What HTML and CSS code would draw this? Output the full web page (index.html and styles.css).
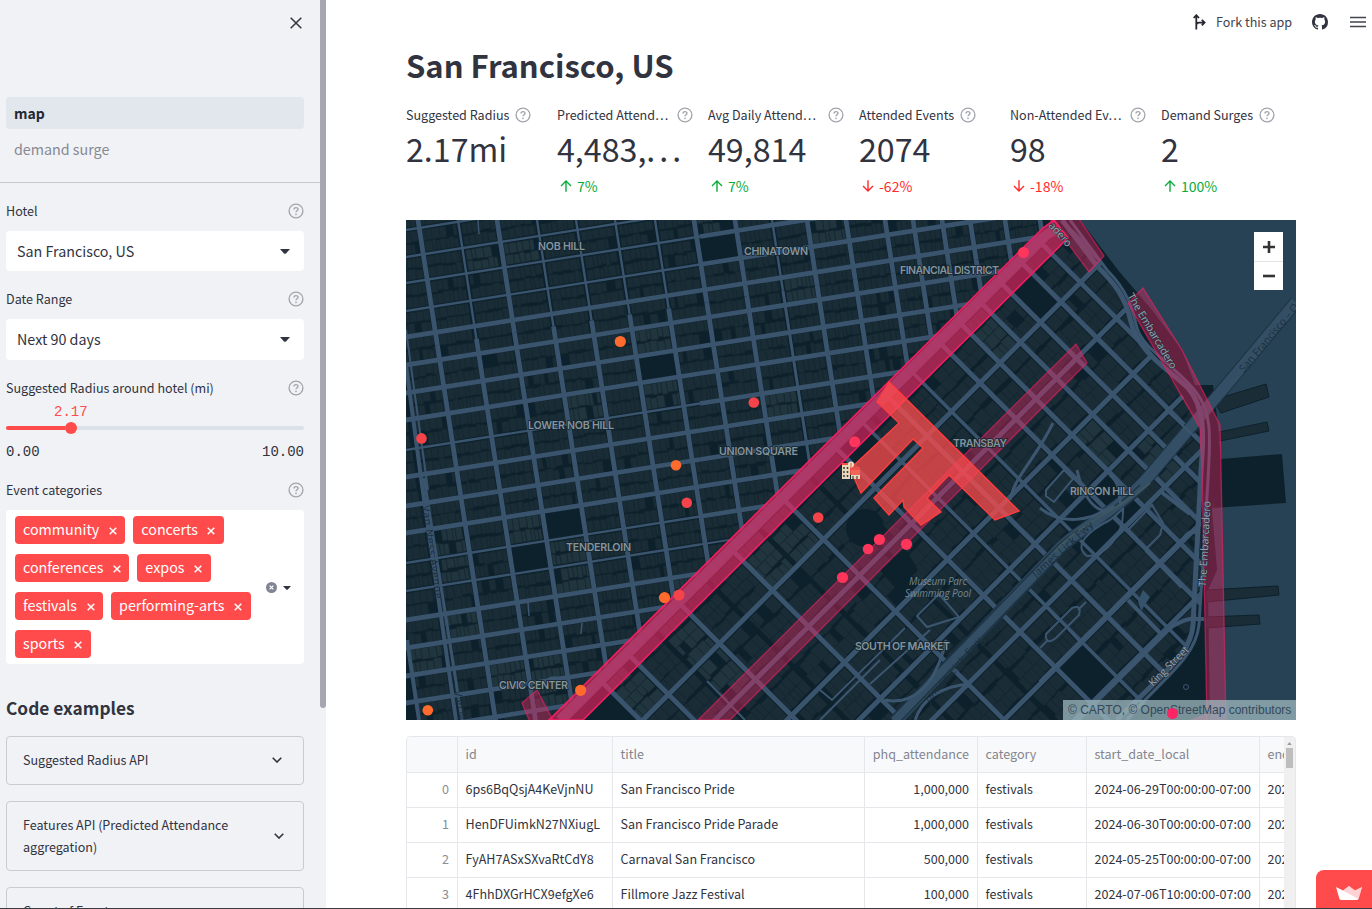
FILE: index.html
```html
<!DOCTYPE html>
<html lang="en">
<head>
<meta charset="utf-8">
<title>San Francisco, US</title>
<link rel="stylesheet" href="styles.css">
</head>
<body>
<svg class="defs" width="0" height="0">
  <symbol id="help" viewBox="0 0 16 16"><circle cx="8" cy="8" r="6.9" fill="none" stroke="#a3a5ad" stroke-width="1.35"/><path d="M6 6.4C6 4 10 4 10 6.3C10 7.7 8 7.7 8 9.3" fill="none" stroke="#a3a5ad" stroke-width="1.4"/><circle cx="8" cy="11.3" r=".85" fill="#a3a5ad"/></symbol>
  <symbol id="x" viewBox="0 0 8 8"><path d="M.7.7 7.3 7.3M7.3.7.7 7.3" fill="none" stroke="currentColor" stroke-width="1.5"/></symbol>
  <symbol id="caret" viewBox="0 0 10 5"><path d="M0 0H10L6 4.4Q5 5.2 4 4.4Z" fill="#31333f"/></symbol>
  <symbol id="chev" viewBox="0 0 10 6"><path d="M.7.7 5 5 9.3.7" fill="none" stroke="#31333f" stroke-width="1.6"/></symbol>
  <symbol id="up" viewBox="0 0 12 12"><path d="M6 11.8V1M1 6 6 1l5 5" fill="none" stroke="currentColor" stroke-width="1.4"/></symbol>
  <symbol id="down" viewBox="0 0 12 12"><path d="M6 .2V11M1 6l5 5 5-5" fill="none" stroke="currentColor" stroke-width="1.4"/></symbol>
</svg>
<div class="app">
  <aside class="sidebar">
    <div class="side-content">
      <div class="side-top"><svg class="close" viewBox="0 0 12 12"><path d="M.7.7 11.3 11.3M11.3.7.7 11.3" stroke="#31333f" stroke-width="1.5"/></svg></div>
      <nav class="nav"><a class="nav-item active">map</a><a class="nav-item">demand surge</a></nav>
      <div class="controls">
        <div class="label">Hotel<svg><use href="#help"/></svg></div>
        <div class="select">San Francisco, US<svg><use href="#caret"/></svg></div>
        <div class="label date">Date Range<svg><use href="#help"/></svg></div>
        <div class="select tall">Next 90 days<svg><use href="#caret"/></svg></div>
        <div class="label radius">Suggested Radius around hotel (mi)<svg><use href="#help"/></svg></div>
        <div class="slider">
          <div class="slider-value">2.17</div>
          <div class="track"><div class="fill"></div><div class="thumb"></div></div>
          <div class="range"><span>0.00</span><span>10.00</span></div>
        </div>
        <div class="label events">Event categories<svg><use href="#help"/></svg></div>
        <div class="multi">
          <div class="tags">
            <span class="tag">community<svg><use href="#x"/></svg></span><span class="tag">concerts<svg><use href="#x"/></svg></span><span class="tag wide">conferences<svg><use href="#x"/></svg></span><span class="tag">expos<svg><use href="#x"/></svg></span><span class="tag">festivals<svg><use href="#x"/></svg></span><span class="tag">performing-arts<svg><use href="#x"/></svg></span><span class="tag">sports<svg><use href="#x"/></svg></span>
          </div>
          <svg class="clear" viewBox="0 0 10 10"><circle cx="5" cy="5" r="5" fill="#808495"/><path d="M3.3 3.3 6.7 6.7M6.7 3.3 3.3 6.7" stroke="#fff" stroke-width="1.1"/></svg>
          <svg class="small-caret"><use href="#caret"/></svg>
        </div>
        <h3>Code examples</h3>
        <div class="expander">Suggested Radius API<svg><use href="#chev"/></svg></div>
        <div class="expander two">Features API (Predicted Attendance<br>aggregation)<svg><use href="#chev"/></svg></div>
        <div class="expander">Count of Events<svg><use href="#chev"/></svg></div>
      </div>
    </div>
    <div class="side-scroll"></div>
  </aside>
  <main class="main">
    <header class="toolbar">
      <svg class="fork" viewBox="0 0 13 16"><path d="M3.3 15.5V1.5M.7 4 3.3 1.2 6 4M3.3 12.2V11.2Q3.3 8.6 6 8.6H11.5M8.8 5.8 11.6 8.6 8.8 11.4" fill="none" stroke="#262730" stroke-width="1.8"/></svg>
      <span>Fork this app</span>
      <svg class="github" viewBox="0 0 16 16"><path fill="#31333f" fill-rule="evenodd" d="M8 0C3.58 0 0 3.58 0 8c0 3.54 2.29 6.53 5.47 7.59.4.07.55-.17.55-.38 0-.19-.01-.82-.01-1.49-2.01.37-2.53-.49-2.69-.94-.09-.23-.48-.94-.82-1.13-.28-.15-.68-.52-.01-.53.63-.01 1.08.58 1.23.82.72 1.21 1.87.87 2.33.66.07-.52.28-.87.51-1.07-1.78-.2-3.64-.89-3.64-3.95 0-.87.31-1.59.82-2.15-.08-.2-.36-1.02.08-2.12 0 0 .67-.21 2.2.82.64-.18 1.32-.27 2-.27s1.36.09 2 .27c1.53-1.04 2.2-.82 2.2-.82.44 1.1.16 1.92.08 2.12.51.56.82 1.27.82 2.15 0 3.07-1.87 3.75-3.65 3.95.29.25.54.73.54 1.48 0 1.07-.01 1.93-.01 2.2 0 .21.15.46.55.38A8.01 8.01 0 0 0 16 8c0-4.42-3.58-8-8-8z"/></svg>
      <svg class="menu" viewBox="0 0 16 12"><path d="M0 1.5H16M0 6H16M0 10.5H16" stroke="#41434e" stroke-width="1.7"/></svg>
    </header>
    <section class="body">
      <h1>San Francisco, US</h1>
      <div class="metrics">
        <div class="metric"><div class="mlabel"><span>Suggested Radius</span><svg><use href="#help"/></svg></div><div class="value">2.17mi</div></div>
        <div class="metric"><div class="mlabel cut"><span>Predicted Attend…</span><svg><use href="#help"/></svg></div><div class="value">4,483,<i>...</i></div><div class="delta up"><svg><use href="#up"/></svg>7%</div></div>
        <div class="metric"><div class="mlabel cut"><span>Avg Daily Attend…</span><svg><use href="#help"/></svg></div><div class="value">49,814</div><div class="delta up"><svg><use href="#up"/></svg>7%</div></div>
        <div class="metric"><div class="mlabel"><span>Attended Events</span><svg><use href="#help"/></svg></div><div class="value">2074</div><div class="delta down"><svg><use href="#down"/></svg>-62%</div></div>
        <div class="metric"><div class="mlabel cut"><span>Non-Attended Ev…</span><svg><use href="#help"/></svg></div><div class="value">98</div><div class="delta down"><svg><use href="#down"/></svg>-18%</div></div>
        <div class="metric"><div class="mlabel"><span>Demand Surges</span><svg><use href="#help"/></svg></div><div class="value">2</div><div class="delta up"><svg><use href="#up"/></svg>100%</div></div>
      </div>
      <div class="map">
        <svg class="canvas" viewBox="406 220 890 500">
          <defs>
            <clipPath id="north"><path d="M406 220H1052L552 720H406Z"/></clipPath>
            <clipPath id="south"><path d="M1048 237 1080 225 1112 280 1126 303 1150 350 1200 420 1202 600 1185 660 1130 720H565Z"/></clipPath>
          </defs>
          <rect x="406" y="220" width="890" height="500" fill="#0d212c"/>
          <g clip-path="url(#north)"><g id="north-lots"></g><g id="north-roads"></g></g>
          <g clip-path="url(#south)"><g id="south-lots"></g>
            <g fill="#0d212c"><circle cx="865" cy="528" r="19"/><path d="M880 570 905 548 918 570 897 590Z"/></g>
            <g id="south-roads"></g></g>
          <path d="M1080 220 1118 270 1152 310 1182 350 1195 385 1213 385 1218 425 1222 470 1212 510 1217 570 1208 590 1210 720H1296V220Z" fill="#264254"/>
          <g fill="#1a2d37" stroke="#0d212c"><path d="M1213 400 1266 384 1269 397 1221 413ZM1219 432 1267 422 1269 431 1220 441ZM1206 590 1278 586 1279 595 1206 602ZM1206 617 1259 615 1260 624 1206 628Z"/></g>
          <path d="M1221 459 1282 454 1286 503 1213 508Z" fill="#0d212c"/>
          <g fill="none" stroke="#3c5670">
            <path d="M1296 302 1230 381 1150 475C1120 510 1080 528 1060 548L895 722" stroke="#1d3443" stroke-width="13"/>
            <path d="M1296 302 1230 381 1150 475C1120 510 1080 528 1060 548L895 722" stroke="#344f65" stroke-width="11"/>
            <path d="M1140 485C1110 515 1080 525 1058 545L892 716" stroke="#1d3443" stroke-width="1.5"/>
            <path d="M1146 488C1115 518 1085 533 1063 553L900 722" stroke="#1d3443" stroke-width="1.5"/>
            <path d="M1062 220 1098 267C1115 284 1125 296 1131 322 1138 352 1168 369 1188 388 1205 407 1204 435 1201 470L1193 625C1191 656 1160 675 1117 720" stroke-width="5"/>
            <path d="M1070 220 1107 270C1128 291 1132 308 1137 328 1142 348 1180 370 1196 392 1213 414 1210 440 1208 480L1199 625C1195 660 1160 680 1127 720" stroke-width="3"/>
            <path d="M1040 508C1062 526 1090 521 1114 506M1010 500C1015 475 1035 460 1053 423M1077 470C1085 505 1100 513 1110 510M1110 475C1122 485 1118 497 1121 506" stroke-width="3"/>
            <path d="M1123 510C1124 535 1105 557 1087 556 1072 545 1090 530 1110 520 1120 513 1125 505 1123 510M1046 490 1064 470 1073 479 1054 502 1046 496ZM1128 530 1152 505 1163 523 1160 535 1146 549Z" stroke-width="2"/>
            <path d="M1046 634 1072 608Q1082 604 1079 615L1056 638Q1045 646 1046 634ZM1040 648 1048 640M1078 610 1086 602M1047 608 1058 620M1068 629 1079 641" stroke-width="2"/>
            <path d="M885 700C910 705 935 690 946 640M915 720C922 700 940 686 970 684" stroke-width="3"/>
            <path d="M1200 532H1192Q1188 533 1184 538L1040 682M1204 619H1190Q1180 621 1170 628L1065 733M1160 491 1190 514M1146 550 1182 587M1128 600 1161 634" stroke-width="4"/>
            <path d="M917 616 939 594 959 617 927 627ZM820 690 832 700 905 628M870 684 930 630M707 681 745 720M820 720 880 660M1166 410 1196 438" stroke-width="2"/>
            <path d="M545 681C553 673 560 680 568 677M582 623 581 634M528 602 529 616M478 220 479 234" stroke-width="1.5"/>
          </g>
          <path d="M1055 552C1082 520 1120 510 1150 483" stroke="#40565e" fill="none" stroke-width="2"/>
          <path d="M1143 590 1150 597 1141 611 1138 601Z" fill="#35536a"/><circle cx="1186" cy="687" r="2.5" fill="none" stroke="#3c5670"/>
          <g fill="none" stroke="#3c5670"><path d="M1056 230Q1042 235 1030 250L560 720" stroke-width="10"/></g>
          <g class="area" fill="#ff2464" stroke="#f01f62" stroke-width="1.3" stroke-opacity=".6">
            <path fill-opacity=".58" stroke-opacity="1" stroke-width="1.6" d="M549 720 1043 228 1054 220 1068 238 583 720Z"/>
            <path fill-opacity=".36" d="M698 720 1076 344 1087 363 730 720Z"/>
            <path fill-opacity=".36" d="M522 703 537 690 553 720 530 722Z"/>
            <path fill-opacity=".36" d="M1050 219H1079L1104 256 1089 272Z"/>
            <path fill-opacity=".36" d="M1143 288 1128 303 1200 428 1202 470 1207 722H1226L1221 470 1220 425 1182 350Z"/>
            <path fill-opacity=".5" stroke="none" d="M1190 720 1207 713V720Z"/>
          </g>
          <path d="M889 382 877 402 899 423 850 469 861 493 913 439 923 448 874 498 889 515 903 500 904 507 921 525 941 512 927 498 949 475 995 520 1019 511Z" fill="#ff4b4b" fill-opacity=".74" stroke="#ff3d3d" stroke-width="1.4"/>
          <g class="place">
            <text x="538" y="250" textLength="47">NOB HILL</text><text x="744" y="255" textLength="64">CHINATOWN</text><text x="900" y="274" textLength="99">FINANCIAL DISTRICT</text><text x="528" y="429" textLength="86">LOWER NOB HILL</text><text x="719" y="455" textLength="79">UNION SQUARE</text><text x="953" y="447" textLength="54">TRANSBAY</text><text x="1070" y="495" textLength="64">RINCON HILL</text><text x="566" y="551" textLength="65">TENDERLOIN</text><text x="855" y="650" textLength="95">SOUTH OF MARKET</text><text x="499" y="689" textLength="69">CIVIC CENTER</text>
          </g>
          <g class="poi"><text x="909" y="585" textLength="58">Museum Parc</text><text x="905" y="597" textLength="66">Swimming Pool</text></g>
          <g class="road-name">
            <text transform="translate(1048 226) rotate(48)">adero</text><text transform="translate(1127 296) rotate(59)" textLength="86">The Embarcadero</text><text transform="translate(1206 587) rotate(-87)" textLength="86">The Embarcadero</text><text transform="translate(1153 687) rotate(-45)" textLength="52">King Street</text>
          </g>
          <g class="road-dim">
            <text transform="translate(422 506) rotate(82)" textLength="94">Van Ness Avenue</text><text transform="translate(454 691) rotate(82)">Van N</text><text transform="translate(1036 578) rotate(-42)" textLength="78">James Lick Fwy</text><text transform="translate(929 703) rotate(-49)" textLength="82">James Lick Fwy</text><text transform="translate(1244 373) rotate(-50)" textLength="86">San Francisco – O</text>
          </g>
          <g transform="translate(842 461)"><path d="M0 4H8V18H0ZM9 9H18V18H9Z" fill="#e8d8b9"/><path d="M0 2H8V4H0Z" fill="#ef5145"/><path d="M2 6V16M5.500 6V16" stroke="#3a3e45" stroke-width="1.5" stroke-dasharray="2 2"/><path d="M8 6H18V14H8Z" fill="#f35148" opacity=".85"/><path d="M11 15V18M15 15V18" stroke="#6b5b50" stroke-width="1.5"/><circle cx="9" cy="3.500" r="3" fill="#f2dfc2"/><path d="M9 2V6" stroke="#c35a43" fill="none"/></g>
          <g fill="#ff6b2c"><circle cx="620.300" cy="341.500" r="5.600"/><circle cx="676" cy="465.300" r="5.300"/><circle cx="664.500" cy="597.600" r="5.600"/><circle cx="580.600" cy="690.300" r="5.600"/><circle cx="427.800" cy="710.200" r="5.300"/></g>
          <g fill="#f44349"><circle cx="421.500" cy="438.400" r="5.300"/><circle cx="753.800" cy="402.500" r="5.300"/><circle cx="686.800" cy="502.800" r="5.300"/><circle cx="818.200" cy="517.600" r="5.300"/><circle cx="679" cy="595" r="5.600"/></g>
          <g fill="#ff355c"><circle cx="1023.500" cy="252.500" r="5.500"/><circle cx="854.700" cy="441.800" r="5.500"/><circle cx="879.400" cy="539.500" r="5.600"/><circle cx="868" cy="549" r="5.300"/><circle cx="906.500" cy="544.300" r="5.600"/><circle cx="842.500" cy="577.500" r="5.600"/></g>
        </svg>
        <div class="zoomer"><button><svg viewBox="0 0 12 12"><path d="M6 0V12M0 6H12" stroke="#333" stroke-width="2.600"/></svg></button><button><svg viewBox="0 0 12 12"><path d="M0 6H12" stroke="#333" stroke-width="2.600"/></svg></button></div>
        <div class="credit">© CARTO, © OpenStreetMap contributors</div>
        <div class="pin"></div>
      </div>
      <div class="table">
        <div class="rows">
          <div class="row head"><span></span><span>id</span><span>title</span><span class="num">phq_attendance</span><span>category</span><span>start_date_local</span><span>end_date</span></div>
          <div class="row"><span class="num idx">0</span><span>6ps6BqQsjA4KeVjnNU</span><span>San Francisco Pride</span><span class="num">1,000,000</span><span>festivals</span><span>2024-06-29T00:00:00-07:00</span><span>2024-06</span></div>
          <div class="row"><span class="num idx">1</span><span>HenDFUimkN27NXiugL</span><span>San Francisco Pride Parade</span><span class="num">1,000,000</span><span>festivals</span><span>2024-06-30T00:00:00-07:00</span><span>2024-06</span></div>
          <div class="row"><span class="num idx">2</span><span>FyAH7ASxSXvaRtCdY8</span><span>Carnaval San Francisco</span><span class="num">500,000</span><span>festivals</span><span>2024-05-25T00:00:00-07:00</span><span>2024-05</span></div>
          <div class="row"><span class="num idx">3</span><span>4FhhDXGrHCX9efgXe6</span><span>Fillmore Jazz Festival</span><span class="num">100,000</span><span>festivals</span><span>2024-07-06T10:00:00-07:00</span><span>2024-07</span></div>
        </div>
        <div class="table-scroll"><svg viewBox="0 0 6 4"><path d="M0 4 3 0 6 4Z" fill="#9a9a9a"/></svg><div class="grip"></div></div>
      </div>
    </section>
  </main>
  <div class="badge"><svg viewBox="0 0 26 14"><path d="M0 1 7 4.500 13 0 19 4.500 26 1 22.500 13Q22 14 20.500 14H5.500Q4 14 3.500 13Z" fill="#fff"/><path d="M13 0 19 4.500 26 1 22.500 13 7 4.500Z" fill="#ffb8bd" opacity=".65"/></svg></div>
  <div class="edge"></div>
</div>
<script src="map.js"></script>
</body>
</html>
```
FILE: styles.css
```css
* { box-sizing: border-box; }
body { margin: 0; font-family: "Source Sans Pro", "Noto Sans CJK SC", sans-serif; font-size: 14.3px; color: #31333f; background: #fff; overflow: hidden; }
h1, h3 { margin: 0; font-weight: 700; }
.defs { position: absolute; }
.app { display: flex; height: 909px; overflow: hidden; position: relative; }

/* Sidebar */
.sidebar { width: 326px; flex: none; display: flex; background: #f0f2f6; overflow: hidden; }
.side-content { width: 320px; }
.side-scroll { width: 6px; height: 708px; background: #a6a6b0; border-radius: 0 0 3px 3px; }
.side-top { height: 97px; padding: 17px 18px 0 0; text-align: right; }
.close { width: 12px; height: 12px; display: inline-block; vertical-align: top; }
.nav { height: 86px; padding: 0 16px 0 6px; border-bottom: 1px solid #c6c8cf; display: flex; flex-direction: column; gap: 4px; }
.nav-item { height: 32px; line-height: 32px; padding-left: 8px; border-radius: 4px; color: #878993; }
.nav-item.active { background: #e2e7ee; color: #262730; font-weight: 700; font-size: 14px; }
.controls { padding: 18px 16px 0 6px; display: flex; flex-direction: column; }
.label { height: 20px; display: flex; justify-content: space-between; align-items: center; font-size: 12.55px; line-height: 20px; }
.label svg { width: 16px; height: 16px; }
.select { height: 40px; margin-top: 10px; background: #fff; border-radius: 4px; padding: 0 14px 2px 11px; display: flex; align-items: center; justify-content: space-between; }
.select svg { width: 10px; height: 5px; margin-top: 2px; }
.select.tall { height: 41px; }
.date { margin-top: 18px; }
.radius { margin-top: 18px; }
.slider { height: 66px; margin-top: 4px; font-family: "Liberation Mono", monospace; font-size: 14px; }
.slider-value { height: 20px; line-height: 20px; padding-left: 48px; color: #ff4b4b; }
.track { height: 4px; margin-top: 4px; border-radius: 2px; background: #dce0e8; display: flex; align-items: center; }
.fill { width: 59px; height: 4px; background: #ff4b4b; border-radius: 2px 0 0 2px; }
.thumb { width: 12px; height: 12px; border-radius: 50%; background: #ff4b4b; }
.range { display: flex; justify-content: space-between; line-height: 20px; margin-top: 12px; }
.events { margin-top: 12px; }
.multi { height: 154px; margin-top: 10px; background: #fff; border-radius: 4px; padding: 6px 13px 0 9px; display: flex; }
.tags { width: 251px; display: flex; flex-wrap: wrap; gap: 10px 8px; align-content: flex-start; }
.tag { height: 28px; padding: 0 8.5px 2px 8px; border-radius: 4px; background: #ff4b4b; color: #fff; display: flex; align-items: center; gap: 9.5px; line-height: 26px; }
.tag svg { width: 8px; height: 8px; margin-top: 3px; }
.multi .clear { width: 11px; height: 11px; margin: 66px 6px 0 0; flex: none; }
.small-caret { width: 8px; height: 4px; margin-top: 70px; flex: none; }
h3 { margin-top: 28px; height: 32px; line-height: 32px; font-size: 17.3px; }
.expander { min-height: 49px; flex: none; margin-top: 12px; border: 1px solid #c9cbd2; border-radius: 4px; padding: 0 21px 1px 16px; display: flex; align-items: center; justify-content: space-between; font-size: 12.55px; line-height: 22px; }
.expander svg { width: 10px; height: 6px; flex: none; }
.expander + .expander { margin-top: 16px; }
.two { height: 70px; padding-right: 19px; }

/* Main column */
.main { flex: 1; min-width: 0; }
.toolbar { height: 42px; padding: 2px 6px 0 0; display: flex; justify-content: flex-end; align-items: center; font-size: 12.55px; color: #41434e; }
.toolbar span { margin-top: -1px; }
.fork { width: 13px; height: 16px; margin-right: 10px; }
.github { width: 16px; height: 16px; margin: 0 22px 0 20px; }
.menu { width: 16px; height: 12px; }
.body { width: 890px; margin-left: 80px; }
h1 { height: 45px; padding-top: 1px; line-height: 44px; font-size: 31px; white-space: nowrap; }
.metrics { height: 133px; padding-top: 17px; display: grid; grid-template-columns: repeat(6, 136px); column-gap: 15px; }
.mlabel { height: 22px; display: flex; align-items: center; gap: 6px; font-size: 12.55px; line-height: 18px; white-space: nowrap; }
.mlabel svg { width: 16px; height: 16px; flex: none; }
.cut { justify-content: space-between; }
.value { height: 46px; line-height: 44px; font-size: 32.2px; white-space: nowrap; }
.value i { font-style: normal; letter-spacing: 4px; }
.delta { height: 24px; margin-top: 2px; display: flex; align-items: center; gap: 5px; padding-left: 3px; font-size: 14px; }
.delta svg { width: 12px; height: 12px; }
.up { color: #09ab3b; }
.down { color: #ff2b2b; }

/* Map */
.map { height: 500px; position: relative; overflow: hidden; }
.canvas { display: block; width: 890px; height: 500px; }
.place { font: 600 10.7px Inter, sans-serif; fill: #84949d; stroke: #14252f; stroke-width: 1.5px; paint-order: stroke; }
.poi { font: italic 10px "Open Sans", sans-serif; fill: #72868f; }
.road-name { font: 10.5px "Open Sans", sans-serif; fill: #9aa8b5; stroke: #22303c; stroke-width: 1px; paint-order: stroke; }
.road-dim { font: 10.5px "Open Sans", sans-serif; fill: #1a2f3c; }
.zoomer { position: absolute; right: 13px; top: 12px; width: 29px; height: 58px; background: #fff; display: flex; flex-direction: column; }
.zoomer button { height: 29px; border: 0; padding: 0; background: none; display: flex; align-items: center; justify-content: center; }
.zoomer button + button { border-top: 1px solid #e3e3e3; }
.zoomer svg { width: 12px; height: 12px; }
.credit { position: absolute; right: 0; bottom: 0; width: 233px; height: 20px; line-height: 20px; padding-left: 5px; background: rgba(164, 190, 196, .72); color: #33495a; font-family: "Liberation Sans", sans-serif; font-size: 12px; white-space: nowrap; }
.pin { position: absolute; left: 761px; top: 488px; width: 11px; height: 11px; border-radius: 50%; background: #ff2464; }

/* Table */
.table { height: 190px; margin-top: 16px; border: 1px solid #e6e7ea; border-radius: 4px 4px 0 0; display: flex; font-size: 12.55px; overflow: hidden; }
.rows { width: 878px; overflow: hidden; }
.row { height: 35px; display: grid; grid-template-columns: 51px 155px 252px 113px 109px 173px 60px; border-bottom: 1px solid #e6e7ea; }
.row span { padding: 0 8px 0 7.5px; border-right: 1px solid #e6e7ea; line-height: 32px; white-space: nowrap; overflow: hidden; }
.row.head { height: 36px; background: #f8f9fb; color: #83858f; }
.row.head span { line-height: 34px; }
.row .num { text-align: right; }
.row .idx { color: #8a8c95; }
.table-scroll { width: 11px; flex: none; background: #f0f0f0; display: flex; flex-direction: column; align-items: center; padding-top: 5px; }
.table-scroll svg { width: 5px; height: 3px; }
.grip { width: 7px; height: 20px; margin-top: 3px; background: #bebebe; }

/* Overlays on the page edge */
.badge { position: absolute; right: 0; bottom: 0; width: 56px; height: 39px; border-radius: 8px 0 0 0; background: #ff4b4b; padding: 16px 0 0 20px; }
.badge svg { display: block; width: 26px; height: 14px; }
.edge { position: absolute; left: 0; right: 0; bottom: 0; height: 1px; background: #3c3c40; }
```
FILE: map.js
```js
(function () {
  var seed = 7;
  function rnd() { seed = (seed * 16807) % 2147483647; return seed / 2147483647; }
  function add(id, html) { document.getElementById(id).innerHTML += html; }
  function road(a, b, c, d, w) { return '<path d="M' + a + ' ' + b + 'L' + c + ' ' + d + '" stroke="#3a546e" stroke-width="' + w + '"/>'; }

  // One city block: rows of narrow lots with irregular depth.
  function block(w, h, x, y, angle, lot) {
    var tone = rnd() < 0.08 ? '#21353f' : '#1a2d37';
    var out = '<g transform="translate(' + x + ' ' + y + ') rotate(' + angle + ')">';
    var r = rnd();
    if (r < 0.03) return '';
    out += '<path fill="' + tone + '" stroke="#15272f" stroke-width=".5" d="';
    var rows = Math.max(2, Math.round(h / 13));
    var rh = h / rows;
    for (var k = 0; k < rows; k++) {
      var px = 0;
      while (px < w - 1) {
        var lw = Math.min(lot + rnd() * lot * 1.6, w - px);
        var lh = rh * (0.8 + rnd() * 0.2);
        var py = k % 2 ? (k + 1) * rh - lh : k * rh;
        if (rnd() > 0.05) out += 'M' + px.toFixed(1) + ' ' + py.toFixed(1) + 'h' + lw.toFixed(1) + 'v' + lh.toFixed(1) + 'h' + (-lw).toFixed(1) + 'z';
        px += lw;
      }
    }
    return out + '"/></g>';
  }

  // Blocks north of the diagonal avenue.
  var xs = [340, 379, 418, 458, 497, 537, 576, 615, 655, 694, 735, 772, 807, 846, 885, 913, 942, 970, 1005, 1040];
  var ys = [202, 230, 257, 283, 311, 337, 365, 393, 420, 450, 477, 506, 533, 563, 591, 620, 648, 676, 703, 731, 760, 788, 816];
  function cross(X, Y) {
    var x = (X + 0.155 * (Y + 64.1 - 220)) / 1.0245;
    return [x, Y - 0.158 * (x - 406)];
  }
  var lots = '', roads = '';
  for (var i = 0; i < xs.length - 1; i++) {
    for (var j = 0; j < ys.length - 1; j++) {
      var p = cross(xs[i], ys[j]);
      lots += block(xs[i + 1] - xs[i] - 6, ys[j + 1] - ys[j] - 5, p[0] + 3, p[1] + 2, -9, 3.2);
    }
  }
  add('north-lots', lots);
  xs.forEach(function (X, n) {
    if (n < 1) return;
    if (n === 1) {
      roads += road(406, 365, 421, 478, 4) + road(421, 478, 456, 720, 4) + road(406, 330, 428, 490, 2) + road(424, 478, 462, 720, 3) + road(407, 640, 419, 720, 4);
      return;
    }
    var major = n === 2 || n === 4 || n === 9 || n === 10 || n > 11;
    var knee = cross(X, 350);
    var top = cross(X, 180), bottom = cross(X, 850);
    roads += road(top[0], top[1], knee[0], knee[1], major ? 4.8 : 2.4) + road(knee[0], knee[1], bottom[0], bottom[1], n === 11 ? 3 : 4.8);
  });
  ys.forEach(function (Y, n) {
    var thin = n < 5 || n === 9 || n === 13 || n === 14;
    roads += road(400, Y + 1, 700, Y - 46.5, thin ? 2.4 : 4.8);
    roads += road(700, Y - 46.5, 1060, Y - 103.3, n === 14 ? 2 : 4.8);
  });
  add('north-roads', roads);

  // Blocks south of the avenue run on a 45 degree grid.
  var sums = [1285, 1363, 1435, 1507, 1579, 1652, 1724, 1795, 1867, 1940];
  var diffs = [-840, -798, -759, -718, -678, -637, -597, -540, -491, -440, -388, -335, -284, -232, -182, -128, -76, -25, 26, 80];
  var skip = { '-335': 1, '-232': 1, '-128': 1, '-25': 1 };
  lots = ''; roads = '';
  for (i = 0; i < sums.length - 1; i++) {
    for (j = 0; j < diffs.length - 1; j++) {
      var s = sums[i], d = diffs[j];
      lots += block((diffs[j + 1] - d) / 1.414 - 5, (sums[i + 1] - s) / 1.414 - 6, (s - d) / 2, (s + d) / 2 + 5, 135, 5)
        .replace('rotate(135)', 'rotate(135) scale(1 -1)');
    }
  }
  add('south-lots', lots);
  sums.forEach(function (s) { roads += road(s - 200, 200, s - 740, 740, 5); });
  diffs.forEach(function (d) {
    if (skip[d]) return;
    roads += road((1285 - d) / 2, (1285 + d) / 2, (1950 - d) / 2, (1950 + d) / 2, d === -440 || d === -540 ? 3.5 : 4.8);
  });
  add('south-roads', roads);
})();
```
